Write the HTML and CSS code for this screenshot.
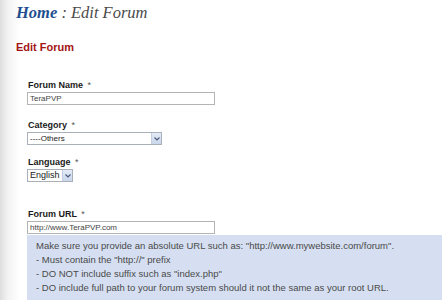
FILE: index.html
```html
<!DOCTYPE html>
<html>
<head>
<meta charset="utf-8">
<link rel="stylesheet" href="styles.css">
</head>
<body>
<div class="page">
  <h1 class="crumb"><span class="home">Home</span> : Edit Forum</h1>
  <h2 class="section">Edit Forum</h2>
  <div class="form">
    <div class="field f1">
      <div class="label">Forum Name <span class="req">*</span></div>
      <div class="input">TeraPVP</div>
    </div>
    <div class="field f2">
      <div class="label">Category <span class="req">*</span></div>
      <div class="select cat"><span class="val">----Others</span><span class="btn"><svg width="6" height="4" viewBox="0 0 6 4"><path d="M0.5 0.5 L3 3 L5.5 0.5" fill="none" stroke="#4a5a78" stroke-width="1.2"/></svg></span></div>
    </div>
    <div class="field f3">
      <div class="label">Language <span class="req">*</span></div>
      <div class="select lang"><span class="val">English</span><span class="btn"><svg width="6" height="4" viewBox="0 0 6 4"><path d="M0.5 0.5 L3 3 L5.5 0.5" fill="none" stroke="#4a5a78" stroke-width="1.2"/></svg></span></div>
    </div>
    <div class="field f4">
      <div class="label">Forum URL <span class="req">*</span></div>
      <div class="input">http://www.TeraPVP.com</div>
    </div>
    <div class="hint">
      <p>Make sure you provide an absolute URL such as: "http://www.mywebsite.com/forum".</p>
      <p>- Must contain the "http://" prefix</p>
      <p>- DO NOT include suffix such as "index.php"</p>
      <p>- DO include full path to your forum system should it not the same as your root URL.</p>
    </div>
  </div>
</div>
</body>
</html>
```

FILE: styles.css
```css
html, body {
  margin: 0;
  padding: 0;
  height: 100%;
}
body {
  background: linear-gradient(to right, #dedede 0, #f3f3f3 8px, #ffffff 20px);
  font-family: "Liberation Sans", Arial, sans-serif;
  overflow: hidden;
}
.page {
  padding-left: 16px;
}
.crumb {
  margin: 3px 0 0 0;
  font-family: "Liberation Serif", "Times New Roman", serif;
  font-style: italic;
  font-weight: normal;
  font-size: 16.5px;
  line-height: 19px;
  color: #4a4a4a;
}
.crumb .home {
  font-weight: bold;
  color: #1f4f8f;
}
.section {
  margin: 19px 0 0 0;
  font-size: 11px;
  line-height: 13px;
  font-weight: bold;
  color: #a31414;
}
.form {
  padding-left: 11px;
  display: flex;
  flex-direction: column;
  align-items: flex-start;
}
.field {
  display: flex;
  flex-direction: column;
  align-items: flex-start;
}
.f1 { margin-top: 26px; }
.f2 { margin-top: 15px; }
.f3 { margin-top: 12px; }
.f4 { margin-top: 27px; }
.label {
  font-size: 9px;
  line-height: 11px;
  font-weight: bold;
  color: #1a1a1a;
  padding-left: 1px;
  margin-bottom: 1px;
}
.req {
  font-weight: normal;
  color: #555;
  margin-left: 2px;
}
.input {
  box-sizing: border-box;
  width: 188px;
  height: 13px;
  border: 1px solid #b4b4b4;
  background: #fff;
  font-size: 8px;
  line-height: 11px;
  color: #444;
  padding-left: 2px;
}
.select {
  box-sizing: border-box;
  height: 13px;
  border: 1px solid #a9b0ba;
  background: #fff;
  display: flex;
  align-items: stretch;
  color: #222;
}
.select .val {
  flex: 1;
  padding-left: 2px;
  overflow: hidden;
  white-space: nowrap;
}
.select .btn {
  width: 9px;
  border-left: 1px solid #c4cede;
  background: linear-gradient(#e4ebf7, #c9d6ec);
  display: flex;
  align-items: center;
  justify-content: center;
}
.cat {
  width: 135px;
  font-size: 8px;
  line-height: 11px;
}
.lang {
  width: 46px;
  font-size: 9px;
  line-height: 11px;
}
.hint {
  box-sizing: border-box;
  align-self: stretch;
  margin-top: 1px;
  background: #d5dff1;
  padding: 5px 0 0 9px;
  color: #4a4a4a;
  font-size: 9.5px;
  line-height: 11px;
  height: 67px;
}
.hint p {
  margin: 0 0 3px 0;
}
```
